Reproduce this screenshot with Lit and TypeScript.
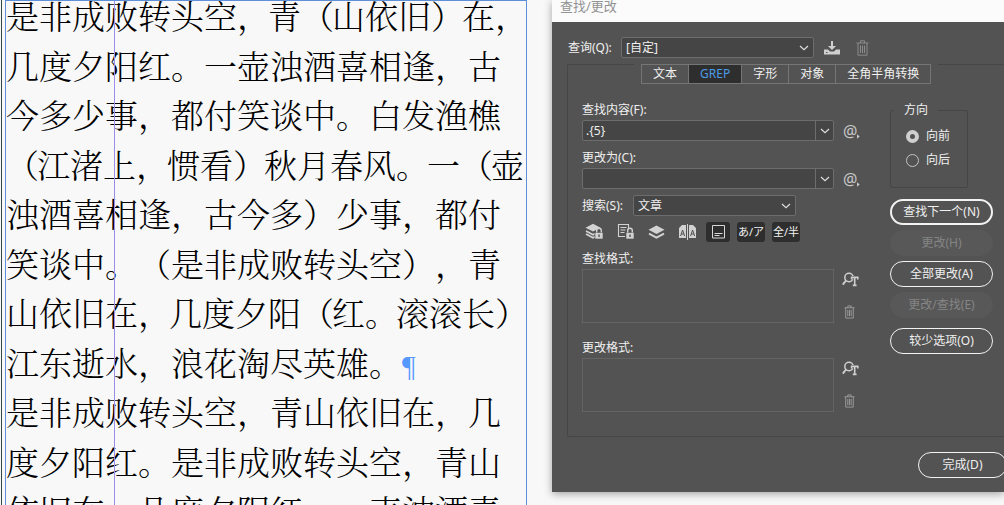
import { LitElement, html, css, svg } from "lit";
import { customElement, state } from "lit/decorators.js";

const PUNCTUATION = /([，。（）])/;

interface StoryLine {
  text: string;
  tight?: boolean;
  end?: boolean;
}

const STORY: StoryLine[] = [
  { text: "是非成败转头空，青（山依旧）在，", tight: true },
  { text: "几度夕阳红。一壶浊酒喜相逢，古" },
  { text: "今多少事，都付笑谈中。白发渔樵" },
  { text: "（江渚上，惯看）秋月春风。一（壶", tight: true },
  { text: "浊酒喜相逢，古今多）少事，都付" },
  { text: "笑谈中。（是非成败转头空），青" },
  { text: "山依旧在，几度夕阳（红。滚滚长）", tight: true },
  { text: "江东逝水，浪花淘尽英雄。", end: true },
  { text: "是非成败转头空，青山依旧在，几" },
  { text: "度夕阳红。是非成败转头空，青山" },
  { text: "依旧在，几度夕阳红。一壶浊酒喜" },
];

const chevron = html`<svg class="chevron" width="10" height="6" viewBox="0 0 10 6" aria-hidden="true">
  <path d="M1 1l4 3.6L9 1" fill="none" stroke="#dedede" stroke-width="1.2" />
</svg>`;

const trash = (w: number, h: number) => html`<svg width=${w} height=${h} viewBox="0 0 13 16" aria-hidden="true">
  <path
    d="M.5 3h12M4.5 3V.8h4V3M2 3v12.2h9V3M4.5 5.5v7.5M6.5 5.5v7.5M8.5 5.5v7.5"
    fill="none" stroke="currentColor" stroke-width="1" />
</svg>`;

const padlock = svg`<path d="M10 9.5h8v6.5h-8z" fill="#d2d2d2" stroke="#535353" stroke-width=".6"/>
  <path d="M11.7 9.5V7.6a2.3 2.3 0 0 1 4.6 0v1.9" fill="none" stroke="#d2d2d2" stroke-width="1.4"/>
  <path d="M14 11.5v2.4" stroke="#535353" stroke-width="1.4"/>`;

const save = html`<svg width="16" height="14" viewBox="0 0 16 14" aria-hidden="true">
  <path d="M7 0h2v5h3L8 9 4 5h3z" fill="#d0d0d0" />
  <path d="M0 8.5h4l2 2h4l2-2h4v5H0z" fill="#d0d0d0" />
  <path d="M2 11.5h1.5" stroke="#535353" />
</svg>`;

const findFormat = html`<svg width="17" height="15" viewBox="0 0 17 15" aria-hidden="true">
  <circle cx="7" cy="5.5" r="4.2" fill="none" stroke="#cfcfcf" stroke-width="1.5" />
  <path d="M4 8.5L.8 12.6" stroke="#cfcfcf" stroke-width="1.9" />
  <path d="M9.6 7.2V5.4h6.2v1.8M12.7 5.4v7.9M11 13.4h3.4" fill="none" stroke="#535353" stroke-width="2.8" />
  <path d="M9.6 7.4V5.4h6.2v2M12.7 5.4v7.9M10.8 13.4h3.8" fill="none" stroke="#cfcfcf" stroke-width="1.6" />
</svg>`;

const lockedLayers = html`<svg width="19" height="17" viewBox="0 0 19 17" aria-hidden="true">
  <path d="M8 .8l7.5 4L8 8.6.5 4.8z" fill="#d2d2d2" />
  <path d="M1 8l7 3.7 2-1M1 11l7 3.7 2-1" fill="none" stroke="#d2d2d2" stroke-width="1.7" />
  ${padlock}
</svg>`;

const lockedStory = html`<svg width="19" height="17" viewBox="0 0 19 17" aria-hidden="true">
  <path d="M9 13.5H2.5v-12h10V6M4.5 4.5h6M4.5 7h5M4.5 9.5h4" fill="none" stroke="#d2d2d2" stroke-width="1.1" />
  ${padlock}
</svg>`;

const hiddenLayers = html`<svg width="17" height="14" viewBox="0 0 17 14" aria-hidden="true">
  <path d="M8.5 .5l8 4.2-8 4.2-8-4.2z" fill="#d2d2d2" />
  <path d="M1 8.6l7.5 4 7.5-4" fill="none" stroke="#d2d2d2" stroke-width="1.9" />
</svg>`;

const masterPages = html`<svg width="19" height="16" viewBox="0 0 19 16" aria-hidden="true">
  <path d="M1 4l3-3h4v3h0v10H1zM11 4V1h4l3 3v10h-7z" fill="#d2d2d2" />
  <path d="M9.5 0v16" stroke="#d2d2d2" stroke-width="1" />
  <path d="M2.6 12l2-6 2 6M3.3 10h2.6M12.6 12l2-6 2 6M13.3 10h2.6" fill="none" stroke="#535353" stroke-width="1" />
</svg>`;

const footnotes = html`<svg width="13" height="14" viewBox="0 0 13 14" aria-hidden="true">
  <path d="M.5 .5h12v12.5h-12zM2.5 8.5h8M2.5 10.5h5" fill="none" stroke="#d8d8d8" />
</svg>`;

@customElement("find-field")
export class FindField extends LitElement {
  static properties = { label: {}, value: {} };
  declare label: string;
  declare value: string;

  static styles = css`
    :host { display: block; color: #f0f0f0; }
    label { display: block; line-height: 20px; }
    .row { display: flex; align-items: center; }
    .combo {
      flex: 1; min-width: 0; display: flex; box-sizing: border-box; height: 21px;
      background: #454545; border: 1px solid #6d6d6d; border-radius: 2px;
    }
    input {
      flex: 1; min-width: 0; border: 0; padding: 0 3px; margin: 0;
      background: none; color: inherit; font: inherit; outline: none;
    }
    button { border: 0; margin: 0; padding: 0; background: none; font: inherit; color: #c8c8c8; }
    .drop { width: 18px; border-left: 1px solid #6d6d6d; display: grid; place-items: center; }
    .special { width: 27px; display: flex; align-items: flex-end; padding-left: 9px; box-sizing: border-box; font-size: 16px; line-height: 18px; }
  `;

  render() {
    return html`
      <label for="text">${this.label}</label>
      <div class="row">
        <div class="combo">
          <input id="text" type="text" .value=${this.value} />
          <button class="drop" aria-label="历史记录">${chevron}</button>
        </div>
        <button class="special" aria-label="要搜索的特殊字符">@<svg width="4" height="7" viewBox="0 0 4 7"><path d="M0 1v5l3-2.5z" fill="#c8c8c8" /></svg></button>
      </div>
    `;
  }
}

@customElement("format-box")
export class FormatBox extends LitElement {
  static properties = { label: {} };
  declare label: string;

  static styles = css`
    :host { display: block; color: #f0f0f0; }
    .label { line-height: 20px; }
    .row { display: flex; }
    .box { flex: 1; height: 52px; border: 1px solid #646464; }
    .tools { width: 27px; display: flex; flex-direction: column; justify-content: space-between; padding: 3px 0; box-sizing: border-box; }
    button { border: 0; margin: 0; padding: 0 0 0 8px; background: none; height: 15px; display: flex; }
    .clear { color: #a4a4a4; padding-left: 10px; }
  `;

  render() {
    return html`
      <div class="label">${this.label}</div>
      <div class="row">
        <div class="box"></div>
        <div class="tools">
          <button aria-label="指定要查找的属性">${findFormat}</button>
          <button class="clear" aria-label="清除指定的属性">${trash(11, 14)}</button>
        </div>
      </div>
    `;
  }
}

@customElement("story-frame")
export class StoryFrame extends LitElement {
  static styles = css`
    :host {
      display: block; position: relative; box-sizing: border-box;
      border: 1px solid #5f8fd8; overflow: hidden;
    }
    .text {
      margin-top: -11px; color: #000;
      font: 300 33px/1.5 "Noto Serif CJK SC", "Noto Sans CJK SC", serif;
      text-spacing-trim: space-all; white-space: nowrap;
    }
    .line { display: block; }
    .tight .mark { margin-right: -2px; }
    .pilcrow { color: #5599ff; font: 30px/1 "Liberation Serif", serif; }
    .guide { position: absolute; top: 0; bottom: 0; left: 108px; width: 1px; background: #9a8ee8; }
  `;

  render() {
    return html`
      <div class="text">
        ${STORY.map(
          (line) => html`<span class="line ${line.tight ? "tight" : ""}">${line.text
            .split(PUNCTUATION)
            .map((part) => (PUNCTUATION.test(part) ? html`<span class="mark">${part}</span>` : part))}${line.end
            ? html`<span class="pilcrow">¶</span>`
            : ""}</span>`
        )}
      </div>
      <div class="guide"></div>
    `;
  }
}

@customElement("app-root")
export class AppRoot extends LitElement {
  @state() private tab = "GREP";

  static styles = css`
    :host {
      display: grid; grid-template-columns: minmax(0, 552fr) minmax(0, 452fr); align-items: start;
      height: 100vh; overflow: hidden; background: #f8f8f8;
      font: 12px/16px "Noto Sans", "Noto Sans CJK SC", sans-serif; color: #f0f0f0;
    }
    button, select { font: inherit; color: inherit; margin: 0; }
    .document { height: 100vh; display: flex; box-sizing: border-box; margin-left: 1px; border-left: 1px solid #2f4747; }
    story-frame { flex: 1; min-width: 0; margin: 0 25px -1px 3px; }
    .dialog { background: #535353; box-shadow: 0 2px 8px rgba(0, 0, 0, 0.35); }
    .title {
      margin: 0; height: 22px; padding-left: 8px; background: #fbfbfb; color: #929292;
      font-size: 13px; font-weight: 400; line-height: 13px;
    }
    .query { display: flex; align-items: center; padding: 15px 0 0 16px; }
    .query label { width: 53px; }
    .select { display: grid; align-items: center; }
    .select > * { grid-area: 1 / 1; }
    .select .chevron { justify-self: end; margin-right: 5px; pointer-events: none; }
    select {
      appearance: none; box-sizing: border-box; width: 100%; height: 21px; padding: 0 4px;
      background: #454545; border: 1px solid #6d6d6d; border-radius: 2px; outline: none;
    }
    .query .select { width: 193px; }
    .icon { border: 0; padding: 0; background: none; display: flex; }
    .query .icon { margin-left: 10px; }
    .query .icon + .icon { margin-left: 16px; color: #8c8c8c; }
    .panel {
      margin: 6px 0 0 15px; border: 1px solid #464646; border-right: 0; border-radius: 2px;
      padding-bottom: 24px;
    }
    .tabs { display: flex; width: max-content; margin: -1px 0 0 66px; padding: 0 7px; background: #535353; }
    .tab {
      height: 20px; padding: 0 11px; border: 1px solid #757575; border-left-width: 0;
      background: #535353; line-height: 18px;
    }
    .tab:first-child { border-left-width: 1px; }
    .tab.active { background: #2e2e2e; color: #4b9ce8; }
    .columns { display: grid; grid-template-columns: 1fr 103px; column-gap: 29px; padding: 16px 11px 0 14px; }
    find-field + find-field { margin-top: 7px; }
    .search { display: flex; align-items: center; margin-top: 6px; }
    .search label { width: 51px; }
    .search .select { width: 163px; }
    .toggles { display: flex; align-items: center; margin: 5px 0 7px; height: 21px; }
    .toggles .icon { width: 31px; height: 20px; align-items: center; justify-content: center; flex: none; }
    .toggles .icon:first-child { margin-left: -3px; }
    .toggles .on { background: #2e2e2e; border-radius: 3px; width: 24px; margin-left: 3px; }
    .toggles .wide { width: 28px; margin-left: 7px; white-space: nowrap; font-size: 11px; }
    format-box + format-box { margin-top: 15px; }
    .side { display: flex; flex-direction: column; align-items: stretch; }
    fieldset {
      width: 78px; height: 86px; box-sizing: border-box; margin: 2px 0 11px; padding: 6px 0 0 15px;
      border: 1px solid #464646; border-radius: 2px;
    }
    legend { padding: 0 10px; margin-left: -12px; }
    .radio { display: flex; align-items: center; height: 24px; }
    .radio input {
      appearance: none; box-sizing: border-box; width: 13px; height: 13px; margin: 0 7px 0 0;
      border: 1px solid #c4c4c4; border-radius: 50%;
    }
    .radio input:checked { border: 4px solid #cfcfcf; }
    .pill {
      height: 26px; box-sizing: border-box; margin-bottom: 5px; padding: 0; border: 1px solid #f2f2f2;
      border-radius: 13px; background: none;
    }
    .pill.primary { border-width: 2px; }
    .pill:disabled { border-color: #585858; background: #585858; color: #858585; }
    .pill.options { margin-top: 5px; }
    .footer { display: flex; justify-content: flex-end; padding: 15px 0 14px; }
    .footer .pill { width: 89px; margin: 0 -3px 0 0; }
  `;

  render() {
    return html`
      <div class="document"><story-frame></story-frame></div>
      <section class="dialog" aria-labelledby="title">
        <h1 class="title" id="title">查找/更改</h1>
        <div class="query">
          <label for="query">查询(Q):</label>
          <div class="select"><select id="query"><option>[自定]</option></select>${chevron}</div>
          <button class="icon" aria-label="存储查询">${save}</button>
          <button class="icon" aria-label="删除查询">${trash(13, 16)}</button>
        </div>
        <div class="panel">
          <div class="tabs" role="tablist">
            ${["文本", "GREP", "字形", "对象", "全角半角转换"].map(
              (name) => html`<button
                role="tab"
                class="tab ${name === this.tab ? "active" : ""}"
                aria-selected=${name === this.tab}
                @click=${() => (this.tab = name)}
              >${name}</button>`
            )}
          </div>
          <div class="columns">
            <div>
              <find-field label="查找内容(F):" value=".{5}"></find-field>
              <find-field label="更改为(C):" value=""></find-field>
              <div class="search">
                <label for="scope">搜索(S):</label>
                <div class="select"><select id="scope"><option>文章</option></select>${chevron}</div>
              </div>
              <div class="toggles">
                <button class="icon" aria-label="包括锁定图层">${lockedLayers}</button>
                <button class="icon" aria-label="包括锁定文章">${lockedStory}</button>
                <button class="icon" aria-label="包括隐藏图层">${hiddenLayers}</button>
                <button class="icon" aria-label="包括主页">${masterPages}</button>
                <button class="icon on" aria-label="包括脚注">${footnotes}</button>
                <button class="icon on wide">あ/ア</button>
                <button class="icon on wide">全/半</button>
              </div>
              <format-box label="查找格式:"></format-box>
              <format-box label="更改格式:"></format-box>
            </div>
            <div class="side">
              <fieldset>
                <legend>方向</legend>
                <label class="radio"><input type="radio" name="direction" checked />向前</label>
                <label class="radio"><input type="radio" name="direction" />向后</label>
              </fieldset>
              <button class="pill primary">查找下一个(N)</button>
              <button class="pill" disabled>更改(H)</button>
              <button class="pill">全部更改(A)</button>
              <button class="pill" disabled>更改/查找(E)</button>
              <button class="pill options">较少选项(O)</button>
            </div>
          </div>
        </div>
        <div class="footer"><button class="pill">完成(D)</button></div>
      </section>
    `;
  }
}
